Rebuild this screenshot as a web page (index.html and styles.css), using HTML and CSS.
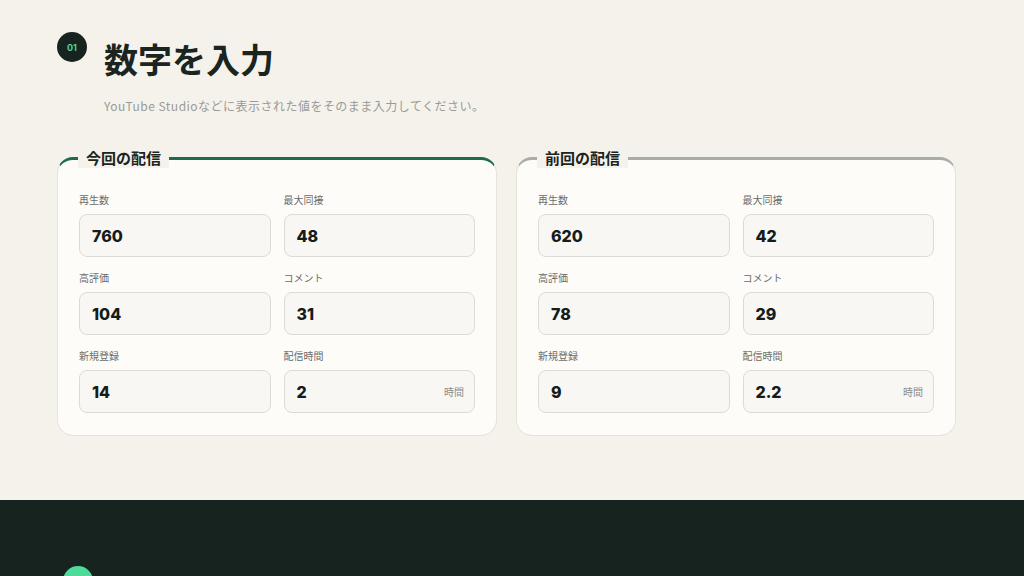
FILE: index.html
```html
<!DOCTYPE html>
<html lang="ja">
<head>
<meta charset="utf-8">
<title>数字を入力</title>
<link rel="stylesheet" href="styles.css">
</head>
<body>
<section class="step">
  <div class="wrap">
    <div class="step-head">
      <span class="badge">01</span>
      <h1 class="step-title">数字を入力</h1>
    </div>
    <p class="step-desc">YouTube Studioなどに表示された値をそのまま入力してください。</p>
    <div class="cards">
      <div class="card card-current">
        <h2 class="card-title">今回の配信</h2>
        <div class="fields">
          <div class="field"><label class="field-label">再生数</label><div class="input"><span class="val">760</span></div></div>
          <div class="field"><label class="field-label">最大同接</label><div class="input"><span class="val">48</span></div></div>
          <div class="field"><label class="field-label">高評価</label><div class="input"><span class="val">104</span></div></div>
          <div class="field"><label class="field-label">コメント</label><div class="input"><span class="val">31</span></div></div>
          <div class="field"><label class="field-label">新規登録</label><div class="input"><span class="val">14</span></div></div>
          <div class="field"><label class="field-label">配信時間</label><div class="input"><span class="val">2</span><span class="unit">時間</span></div></div>
        </div>
      </div>
      <div class="card card-prev">
        <h2 class="card-title">前回の配信</h2>
        <div class="fields">
          <div class="field"><label class="field-label">再生数</label><div class="input"><span class="val">620</span></div></div>
          <div class="field"><label class="field-label">最大同接</label><div class="input"><span class="val">42</span></div></div>
          <div class="field"><label class="field-label">高評価</label><div class="input"><span class="val">78</span></div></div>
          <div class="field"><label class="field-label">コメント</label><div class="input"><span class="val">29</span></div></div>
          <div class="field"><label class="field-label">新規登録</label><div class="input"><span class="val">9</span></div></div>
          <div class="field"><label class="field-label">配信時間</label><div class="input"><span class="val">2.2</span><span class="unit">時間</span></div></div>
        </div>
      </div>
    </div>
  </div>
</section>
<section class="step-dark">
  <div class="wrap-dark">
    <span class="badge-green"></span>
  </div>
</section>
</body>
</html>
```
FILE: styles.css
```css
html, body {
  margin: 0;
  padding: 0;
}
body {
  background: #f5f2ec;
  font-family: "Noto Sans CJK JP", "Noto Sans", sans-serif;
  color: #1a2420;
}
.step {
  padding: 32px 0 64px;
}
.wrap {
  padding-left: 57px;
  width: 899px;
}
.step-head {
  display: flex;
  align-items: flex-start;
  gap: 17px;
}
.badge {
  flex: none;
  width: 30px;
  height: 30px;
  border-radius: 50%;
  background: #17231f;
  color: #4fd493;
  font-family: "Inter", "Liberation Sans", sans-serif;
  font-weight: 700;
  font-size: 9px;
  display: flex;
  align-items: center;
  justify-content: center;
}
.step-title {
  margin: 5px 0 0;
  font-size: 34px;
  line-height: 44px;
  font-weight: 700;
  color: #1a2420;
}
.step-desc {
  margin: 16px 0 0 47px;
  font-size: 12px;
  line-height: 18px;
  letter-spacing: 0.04em;
  color: #9a9b97;
}
.cards {
  margin-top: 42px;
  display: grid;
  grid-template-columns: 440px 440px;
  gap: 19px;
}
.card {
  position: relative;
  background: #fdfcf9;
  border: 1px solid #e7e3db;
  border-top: 3px solid #1d6b4a;
  border-radius: 16px;
  padding: 33px 21px 22px;
}
.card-prev {
  border-top-color: #a9ada7;
}
.card-title {
  position: absolute;
  top: -12px;
  left: 20px;
  margin: 0;
  padding: 0 8px;
  background: #f5f2ec;
  font-size: 15px;
  line-height: 20px;
  font-weight: 700;
  color: #1a2420;
}
.fields {
  display: grid;
  grid-template-columns: 1fr 1fr;
  column-gap: 13px;
  row-gap: 14px;
}
.field {
  display: flex;
  flex-direction: column;
  gap: 7px;
}
.field-label {
  font-size: 10px;
  line-height: 14px;
  color: #6a6d69;
}
.input {
  height: 41px;
  border: 1px solid #dedbd3;
  border-radius: 8px;
  background: #f8f7f4;
  display: flex;
  align-items: center;
  justify-content: space-between;
  padding: 0 10px 0 12px;
}
.val {
  font-family: "Inter", "Liberation Sans", sans-serif;
  font-weight: 800;
  font-size: 16px;
  color: #151c19;
}
.unit {
  font-size: 10px;
  color: #8a8c88;
}
.step-dark {
  background: #17231f;
  min-height: 1200px;
}
.wrap-dark {
  padding: 66px 0 0 63px;
}
.badge-green {
  display: block;
  width: 30px;
  height: 30px;
  border-radius: 50%;
  background: #4edb9a;
}
```
